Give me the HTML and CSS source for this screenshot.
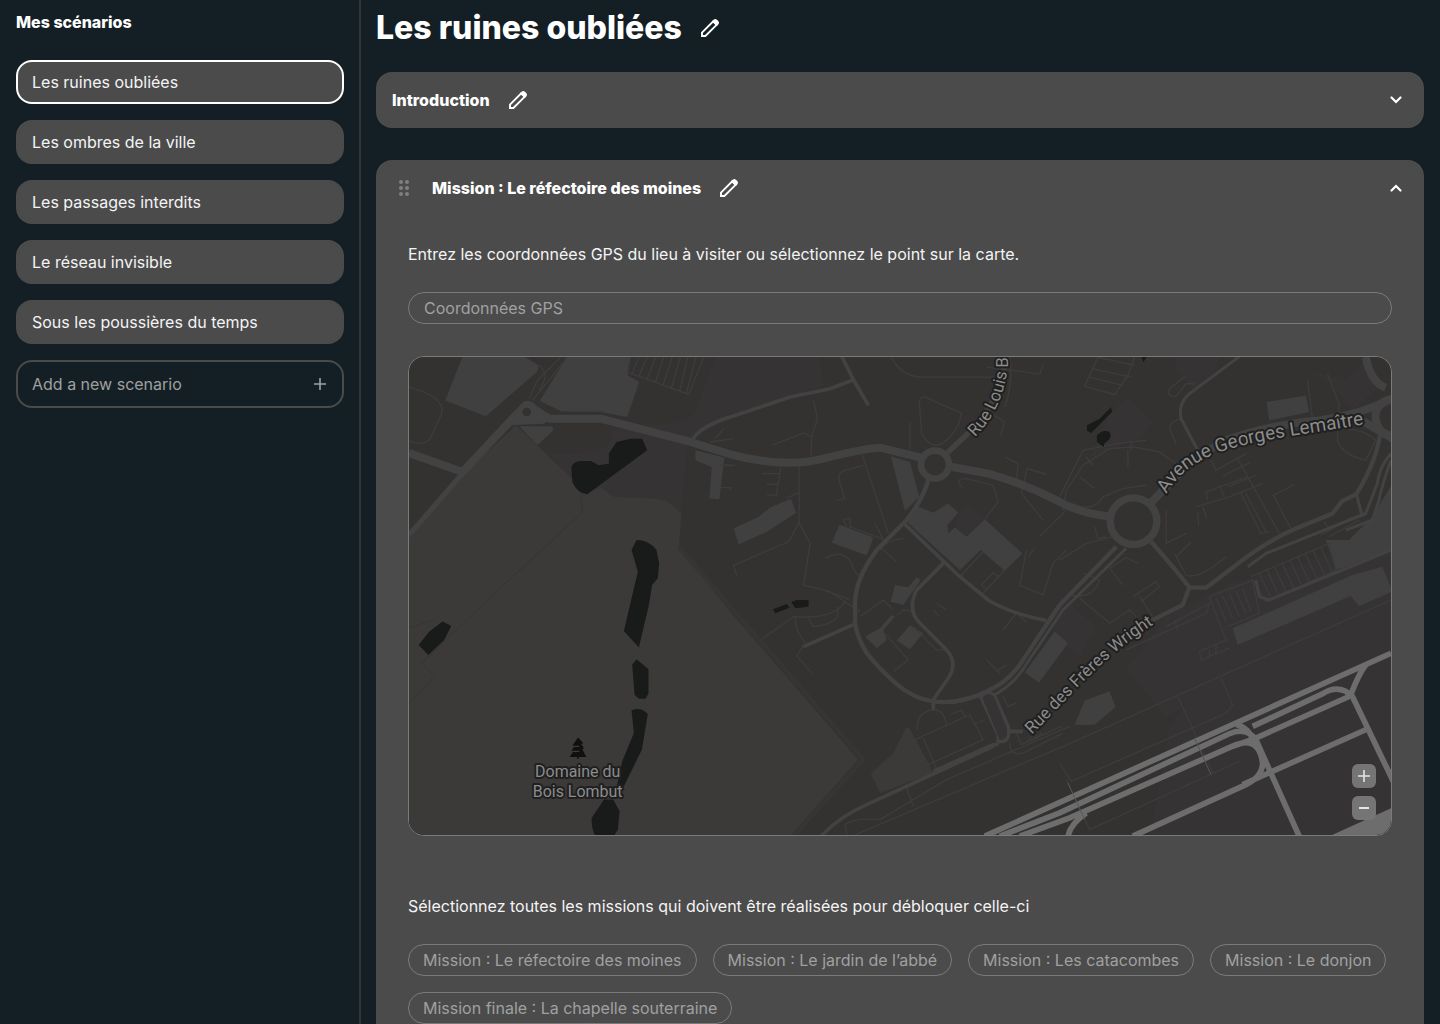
FILE: index.html
```html
<!DOCTYPE html>
<html lang="fr">
<head>
<meta charset="utf-8">
<meta name="viewport" content="width=device-width, initial-scale=1">
<title>Les ruines oubliées</title>
<link rel="stylesheet" href="styles.css">
</head>
<body>
<svg class="sprite" aria-hidden="true">
  <symbol id="pencil" viewBox="0 0 24 24">
    <path d="M4 20v-3.400L15.200 5.400l3.400 3.400L7.400 20z" fill="none" stroke="currentColor" stroke-width="1.900"/>
    <path d="M14 5.200l1.600-1.500a2.400 2.400 0 0 1 3.300 0l1.400 1.400a2.400 2.400 0 0 1 0 3.300L18.800 10z" fill="currentColor"/>
  </symbol>
  <symbol id="chevron" viewBox="0 0 24 24">
    <path d="M7.500 9.500l4.500 4.500L16.500 9.500" fill="none" stroke="currentColor" stroke-width="2.200" stroke-linecap="round"/>
  </symbol>
  <symbol id="plus" viewBox="0 0 24 24">
    <path d="M12 6v12M6 12h12" fill="none" stroke="currentColor" stroke-width="1.600"/>
  </symbol>
  <symbol id="minus" viewBox="0 0 24 24">
    <path d="M7 12h10" fill="none" stroke="currentColor" stroke-width="1.800"/>
  </symbol>
  <symbol id="grip" viewBox="0 0 24 24">
    <g fill="currentColor"><circle cx="9" cy="6" r="2"/><circle cx="15" cy="6" r="2"/><circle cx="9" cy="12" r="2"/><circle cx="15" cy="12" r="2"/><circle cx="9" cy="18" r="2"/><circle cx="15" cy="18" r="2"/></g>
  </symbol>
</svg>

<div class="app">
  <aside class="sidebar">
    <h2 class="sidebar-title">Mes scénarios</h2>
    <nav class="scenarios" aria-label="Mes scénarios">
      <a class="scenario scenario-active" href="#" aria-current="page">Les ruines oubliées</a>
      <a class="scenario" href="#">Les ombres de la ville</a>
      <a class="scenario" href="#">Les passages interdits</a>
      <a class="scenario" href="#">Le réseau invisible</a>
      <a class="scenario" href="#">Sous les poussières du temps</a>
      <button class="add" type="button"><span>Add a new scenario</span><svg class="icon"><use href="#plus"/></svg></button>
    </nav>
  </aside>

  <main class="content">
    <header class="page-head">
      <h1 class="page-title">Les ruines oubliées</h1>
      <button class="icon-button" type="button" aria-label="Renommer le scénario"><svg class="icon"><use href="#pencil"/></svg></button>
    </header>

    <section class="card">
      <div class="card-head">
        <h2 class="card-title">Introduction</h2>
        <button class="icon-button" type="button" aria-label="Renommer"><svg class="icon"><use href="#pencil"/></svg></button>
        <button class="icon-button toggle" type="button" aria-label="Déplier" aria-expanded="false"><svg class="icon"><use href="#chevron"/></svg></button>
      </div>
    </section>

    <section class="card">
      <div class="card-head">
        <button class="icon-button grip" type="button" aria-label="Déplacer"><svg class="icon"><use href="#grip"/></svg></button>
        <h2 class="card-title">Mission : Le réfectoire des moines</h2>
        <button class="icon-button" type="button" aria-label="Renommer"><svg class="icon"><use href="#pencil"/></svg></button>
        <button class="icon-button toggle open" type="button" aria-label="Replier" aria-expanded="true"><svg class="icon"><use href="#chevron"/></svg></button>
      </div>
      <div class="card-body">
        <label class="hint" for="gps">Entrez les coordonnées GPS du lieu à visiter ou sélectionnez le point sur la carte.</label>
        <input class="field" id="gps" type="text" placeholder="Coordonnées GPS">

        <div class="map">
          <svg class="map-canvas" viewBox="8 6 984 480" preserveAspectRatio="xMidYMid slice" role="img" aria-label="Carte">
            <defs>
              <path id="way-louis" d="M575 87Q604 58 608 14V-30"/>
              <path id="way-avenue" d="M767 144C788 108 822 97 890 86L990 70"/>
              <path id="way-wright" d="M632 385C671 347 700 307 764 268"/>
            </defs>
            <g transform="scale(.333333)">
              <path class="ground" d="M0 0h3000v1480H0z"/>
              <!-- districts -->
              <g class="district">
                <path d="M945 18H1255L1272 105 1000 200 870 268 858 300 843 490 800 450 640 440 500 370 440 310 560 310 620 290 640 235 850 215 882 190z"/>
                <path d="M2980 690L2470 920 2310 1130 2250 1470H2980z"/>
                <path d="M2980 560L2500 700 2300 800 2180 960 2300 1100 2980 800z"/>
                <path d="M2130 190L2185 138 2260 215 2230 260 2070 320z"/>
                <path d="M1980 735L2090 830 2040 920 1960 860z"/>
                <path d="M2330 18L2460 18 2440 80 2380 115 2330 60zM2720 60l120 30 60-60 40 80-80 70-70-90z"/>
              </g>
              <path class="forest" d="M345 225L520 390 545 430 600 412 640 440 760 445 800 452 843 490 835 590 990 785 1375 1230 1160 1470H0V570L185 375z"/>
              <path class="verge" d="M835 590L990 770 1390 1230 1170 1470"/>
              <path class="forest" d="M1520 1130L1480 1210 1412 1272 1440 1330 1600 1270z"/>
              <path class="boundary" d="M541 430L545 487 265 745 62 940 102 980 24 1062M24 835l80-28"/>
              <!-- buildings -->
              <g class="building">
                <path d="M185 18H370L415 45 408 65 255 198 133 150z"/>
                <path d="M500 18H690L682 75 716 95 680 200 600 185 480 182 417 152z"/>
                <path d="M355 228H455L458 240 410 285z"/>
                <path d="M885 300L972 322 957 447 927 445 934 350 885 330z"/>
                <path d="M1000 535L1075 500 1110 472 1172 446 1188 488 1100 545 1015 583z"/>
                <path d="M1318 524L1420 562 1400 616 1295 578z"/>
                <path d="M1472 318L1530 335 1558 440 1515 482z"/>
                <path d="M1552 468L1600 488 1645 460 1675 488 1642 525 1645 550 1665 532 1700 560 1755 507 1868 610 1815 662 1742 600 1680 660 1522 516z"/>
                <path d="M1485 705L1525 712 1550 682 1562 690 1510 765 1472 755z"/>
                <path d="M1395 860L1440 835 1475 795 1485 800 1450 840 1460 870 1430 895z"/>
                <path d="M1530 827L1570 850 1530 898 1490 872z"/>
                <path d="M1965 845L2005 880 1918 998 1875 968z"/>
                <path d="M2055 1052L2130 1024 2148 1072 2085 1125 2025 1126z"/>
                <path d="M2602 155L2720 135 2730 185 2610 210z"/>
                <path d="M2980 400L2920 500 2850 570 2780 570 2812 660 2980 600z"/>
                <path d="M2500 835L2580 800 2860 675 2950 650 2980 725 2880 768 2855 738 2515 885z"/>
              </g>
              <path class="district" d="M1675 490L1700 460 1755 505 1700 558 1665 530z"/>
              <!-- lanes and paths -->
              <g class="lane">
                <path d="M24 110Q140 140 120 195L90 260Q75 290 24 272M385 145L410 90 480 20M395 150L440 95 500 20M415 45Q450 70 415 120M480 182H610"/>
                <path d="M690 20L680 65 865 132 910 20M715 20L695 70M740 20L715 78M765 20L740 86M790 20L765 94M815 20L788 103M840 20L813 112M862 20L838 121M886 20L858 129"/>
                <path d="M930 275L1000 265M945 265L970 235M960 412H990V420M960 345H1005M1085 370H1140M1100 402H1135M1100 435H1128L1142 350M1155 445L1195 428M1197 345V515L1165 575 1000 645 1010 680M1195 515L1230 580 1210 705 1290 725 1380 785"/>
                <path d="M1240 150L1252 205 1235 255 1232 315M1115 285L1210 248 1235 260M1385 310L1465 550M1390 345L1330 362Q1310 370 1320 400L1333 445 1310 452M1340 530L1330 508 1350 505 1350 530 1450 568 1425 520M1275 625Q1330 595 1355 640 1360 670 1378 675"/>
                <path d="M1475 20Q1500 75 1560 80H1800M1558 150Q1570 130 1585 145L1685 188 1675 225Q1610 330 1565 250ZM1530 215V300M1815 170Q1840 100 1830 18M1760 50L1920 70 1930 45M1785 195L1813 215 1803 255"/>
                <path d="M1690 415Q1660 385 1700 385L1780 405 1795 455 1755 507M1815 320L1855 340 1850 390M1940 372L1882 355 1865 430 1930 510M1920 560L2000 480M1880 600L1860 705 1930 735 1960 640 2000 600M1905 595L1885 620M1445 595L1490 635M1440 600Q1460 570 1510 565M1680 680L1750 605M1745 735L1815 660M1745 705L1780 668 1795 680 1760 720z"/>
                <path d="M1270 720Q1330 740 1350 750M1088 865L1180 800Q1300 810 1335 755M1225 805L1240 830Q1330 820 1310 770M1185 800L1190 840 1215 880M1210 885L1190 918 1235 970M1380 800L1450 750 1480 780M1490 795L1510 780 1545 785M1450 845L1525 930 1480 965M1600 780L1620 800M1610 760L1640 780M1540 830L1610 900 1645 900M1760 930L1800 970M1790 965L1820 945M1810 840L1850 790 1880 815"/>
                <path d="M1552 1140Q1550 1085 1600 1080 1635 1080 1640 1130M1525 1135L1585 1245M1545 1170L1710 1095 1750 1170 1585 1245M1570 1165L1610 1258M1650 1095L1685 1080 1695 1100M1720 1125L1755 1110M1810 1040L1825 1070 1850 1060M1520 1315L1540 1370M1340 1458L1335 1425Q1360 1405 1440 1410L1640 1290 2010 1130M1360 1458L1990 1190M1830 1180Q1830 1220 1870 1210L1990 1150M1850 1150L1865 1185 1985 1130M1895 1160l-15 20M1910 1155l-15 20M1925 1148l-15 20"/>
                <path d="M2095 20L2055 108 2145 132 2185 75 2205 20M2095 20L2205 45M2080 55L2195 80M2070 80L2170 105M2360 75L2310 115Q2300 140 2330 138L2360 100 2385 100M2330 280L2310 235Q2310 215 2345 205M1990 480L2000 420 2050 345 2130 295 2200 290 2280 305 2330 340M1980 440L2050 300 2150 280 2240 270M2195 270V300M2060 320L2080 345M2185 300V350M2040 380L2085 415M2020 460Q2080 490 2110 440L2170 415 2240 405"/>
                <path d="M2435 330L2450 360 2540 310M2470 378L2555 335M2485 410L2570 375M2515 325L2640 550M2390 470L2490 440 2590 400M2425 450L2420 425 2545 380M2460 405L2475 440M2395 485L2398 525M2410 470L2422 505M2525 430L2585 550 2610 545M2540 430L2600 545M2675 535L2622 435 2685 403M2725 90L2740 205M2785 70L2820 160 2815 270Q2830 315 2900 330L2930 270Q2900 240 2840 235"/>
                <path d="M2300 480V580L2360 550M2330 620L2375 575M2325 610L2360 675Q2400 690 2480 620M2085 530L2095 565 2120 560M1980 630L2060 580 2140 560M2130 655L2170 705M2130 655L2180 622 2215 640M2050 670L2100 690Q2080 750 2010 735M2200 740L2270 695 2280 710 2225 755M2220 740L2260 800M2040 745L2130 820 2190 780 2210 800M2180 900L2420 790 2430 760 2300 830M2325 810L2335 840M2765 555L2860 500M2790 560L2880 510M2775 515L2785 530"/>
                <path d="M2430 740L2480 870 2400 905 2405 930 2490 895M2430 740L2560 690 2580 790 2485 830M2450 745L2480 815M2470 738L2500 805M2490 730L2520 800M2510 722L2540 790M2530 714L2555 785M2430 900V925M2450 885V910M1980 1195L2976 750M1980 1240L2015 1295 2480 1090 2500 1065 2465 985M2335 1040L2400 1180 2440 1270M2000 1290L2070 1440 2520 1235"/>
                <path d="M2555 680L2790 580 2810 660 2600 755 2560 690M2580 670l35 75M2603 660l35 75M2626 650l35 75M2649 640l35 75M2672 630l35 75M2695 620l35 75M2718 610l35 75M2741 600l35 75M2764 590l35 75"/>
              </g>
              <!-- streets -->
              <g class="street">
                <path class="w16" d="M185 370L24 555"/>
                <path class="w12" d="M878 265Q905 225 990 200L1170 140 1290 115 1360 88M1325 18L1360 88 1405 165"/>
                <path class="w16" d="M1638 312L1730 225Q1810 130 1820 0"/>
                <path class="w14" d="M1588 380Q1570 450 1515 515L1430 600Q1370 680 1365 750V820Q1370 860 1400 910 1440 960 1490 1003T1600 1055Q1680 1065 1760 1025 1830 995 1870 930L1980 765 2150 590"/>
                <path class="w10" d="M1775 1040Q1845 1005 1885 935L1990 780 2180 595M1740 1040Q1700 1038 1660 1060"/>
                <path class="w12" d="M1510 518L1680 680 1765 750Q1830 790 1940 812M1630 640L1550 720Q1520 780 1560 820L1640 900Q1675 940 1645 985L1600 1050V1080M1365 822L1210 890"/>
                <path class="w12" d="M1262 1460Q1320 1400 1400 1365L1780 1190M1743 1040L1795 1155Q1800 1190 1780 1185L1600 1265M1745 1045Q1760 1015 1785 1040L1825 1130Q1835 1180 1795 1175M1825 1145H1870"/>
                <path class="w14" d="M2255 575L2320 650 2370 712 2350 765 2230 825M2370 713H2420L2540 622Q2620 565 2690 535L2800 490 2830 452 2872 432Q2935 330 2945 240"/>
                <path class="w10" d="M2395 300L2345 205Q2335 160 2370 130L2520 18M2976 310Q2940 350 2935 400L2900 490 2600 610 2545 650M2976 330Q2950 400 2940 450L2920 510 2840 540M2872 432L2890 500M2570 690L2580 740 2610 750 2976 600"/>
                <path class="w24" d="M24 308L185 365 340 200Q378 150 420 190L445 205H600L870 275 990 312Q1150 355 1270 325T1440 292L1575 325M1645 348L1765 370Q1860 395 1980 455 2040 490 2140 500"/>
                <path class="w24" d="M2250 462L2310 400Q2380 320 2480 270 2600 225 2760 210 2880 195 2990 140M2870 200L2990 270"/>
                <path class="w24" d="M2976 145Q2925 160 2930 205T2976 255M2900 20Q2915 95 2960 112"/>
              </g>
              <path class="island" d="M1748 1045Q1765 1020 1785 1045L1822 1140Q1822 1170 1800 1172z"/>
              <path class="junction" d="M325 225L350 175Q378 130 410 170L445 205 430 220z"/>
              <circle class="hole" cx="378" cy="185" r="13"/>
              <circle class="ring" cx="1605" cy="343" r="42"/>
              <circle class="ring big" cx="2202" cy="513" r="70"/>
              <!-- taxiways -->
              <g class="taxiway">
                <path d="M1755 1460L2976 910M1800 1460L1980 1390 2490 1152Q2540 1130 2570 1170L2700 1460M2560 1130L2770 1032Q2820 1000 2860 1040L2990 1310M1860 1460L2010 1405 2510 1185Q2580 1160 2590 1240 2590 1280 2540 1305L2200 1460M2500 1190L2570 1165 2850 1040M2855 1035Q2880 970 2900 945M2530 1305L2900 1140M2005 1462Q2010 1425 2060 1390M2510 1125Q2550 1130 2570 1190"/>
                <path class="apron" d="M2780 1465L2990 1370V1470z"/>
              </g>
              <path class="seam" d="M2385 1165L2435 1275M2005 1300L2055 1410"/>
              <!-- ponds -->
              <g class="water">
                <path d="M512 350Q518 332 545 332H570L595 345 625 340V310L648 275 690 265H725L740 300 560 432Q530 430 515 395z"/>
                <path d="M708 570Q745 570 768 600L776 640 772 685 755 705 744 770 715 893 670 843 700 715 712 665 693 600z"/>
                <path d="M708 928L744 958V1030L735 1047H715L702 1035 695 945z"/>
                <path d="M693 1082Q720 1070 742 1093L724 1200 670 1310 645 1330 665 1235 700 1150z"/>
                <path d="M610 1350H638L657 1385 652 1440 640 1460H585Q572 1440 573 1405z"/>
                <path d="M125 815L151 828 130 870 82 915 53 885 85 845z"/>
                <path d="M1118 778L1160 762 1168 773 1125 790zM1173 755L1190 750H1225V770L1185 775z"/>
                <path d="M2062 225L2100 205 2135 170 2137 185 2075 248 2062 242zM2092 255Q2110 235 2130 245 2140 265 2115 278L2112 290 2092 275zM2225 18H2242L2232 35z"/>
              </g>
              <path class="tree" d="M532 1163L548 1180 542 1183 550 1196 545 1199 557 1222H534V1228H530V1222H507L517 1207H536V1203H512L520 1192H536V1188H515z"/>
            </g>
            <g class="label">
              <text class="label-small" x="177" y="427" text-anchor="middle">Domaine du</text>
              <text class="label-small" x="177" y="447" text-anchor="middle">Bois Lombut</text>
              <text><textPath href="#way-louis">Rue Louis B</textPath></text>
              <text class="label-large"><textPath href="#way-avenue">Avenue Georges Lemaître</textPath></text>
              <text><textPath href="#way-wright">Rue des Frères Wright</textPath></text>
            </g>
          </svg>
          <div class="zoom">
            <button class="zoom-button" type="button" aria-label="Zoomer"><svg class="icon"><use href="#plus"/></svg></button>
            <button class="zoom-button" type="button" aria-label="Dézoomer"><svg class="icon"><use href="#minus"/></svg></button>
          </div>
        </div>

        <p class="hint">Sélectionnez toutes les missions qui doivent être réalisées pour débloquer celle-ci</p>
        <div class="chips">
          <button class="chip" type="button">Mission : Le réfectoire des moines</button>
          <button class="chip" type="button">Mission : Le jardin de l’abbé</button>
          <button class="chip" type="button">Mission : Les catacombes</button>
          <button class="chip" type="button">Mission : Le donjon</button>
          <button class="chip" type="button">Mission finale : La chapelle souterraine</button>
        </div>
      </div>
    </section>
  </main>
</div>
</body>
</html>
```
FILE: styles.css
```css
* { box-sizing: border-box; }
body {
  margin: 0;
  background: #141f25;
  color: #fff;
  font: 400 16px/20px Inter, "Liberation Sans", sans-serif;
}
button, input { font: inherit; color: inherit; }
button { padding: 0; border: 0; background: none; cursor: pointer; }
h1, h2, p { margin: 0; }
.sprite { position: absolute; width: 0; height: 0; }
.icon { display: block; width: 24px; height: 24px; }

.app { display: flex; height: 100vh; }
.sidebar {
  flex: 0 0 361px;
  padding: 12px 15px 16px 16px;
  border-right: 2px solid #303538;
}
.sidebar-title { font-size: 16px; font-weight: 800; }
.scenarios { display: flex; flex-direction: column; gap: 16px; margin-top: 28px; }
.scenario {
  padding: 10px 14px;
  border: 2px solid #4b4b4b;
  border-radius: 16px;
  background: #4b4b4b;
  color: #f4f4f4;
  text-decoration: none;
}
.scenario-active { border-color: #fff; }
.add {
  display: flex;
  align-items: center;
  justify-content: space-between;
  padding: 10px;
  padding-left: 14px;
  border: 2px solid #4b4b4b;
  border-radius: 16px;
  color: #a0a0a0;
  text-align: left;
}

.content {
  flex: 1;
  min-width: 0;
  padding: 8px 16px 32px 15px;
  overflow-y: auto;
  scrollbar-width: none;
}
.page-head { display: flex; align-items: center; gap: 16px; margin-bottom: 24px; }
.page-title { font-size: 32px; line-height: 40px; font-weight: 800; }
.card { margin-bottom: 32px; border-radius: 16px; background: #4b4b4b; }
.card-head { display: flex; align-items: center; gap: 16px; padding: 16px; }
.card-title { font-size: 16px; line-height: 24px; font-weight: 800; }
.toggle { margin-left: auto; }
.open .icon { transform: rotate(180deg); }
.grip { color: #808080; cursor: grab; }

.card-body { padding: 28px 32px 32px; }
.hint { display: block; margin-bottom: 28px; color: #f4f4f4; }
.field {
  display: block;
  width: 100%;
  height: 32px;
  padding: 0 15px;
  border: 1px solid #7b7b7b;
  border-radius: 16px;
  background: transparent;
}
.field::placeholder { color: #a0a0a0; opacity: 1; }

.map {
  position: relative;
  height: 480px;
  margin: 32px 0 60px;
  border: 1px solid #7b7b7b;
  border-radius: 16px;
  overflow: hidden;
}
.map-canvas { display: block; width: 100%; height: 100%; }
.zoom {
  position: absolute;
  right: 15px;
  bottom: 15px;
  display: grid;
  gap: 8px;
}
.zoom-button { border-radius: 6px; background: #757575; color: #e4e4e4; }

.ground { fill: #343231; }
.district { fill: #363334; }
.forest { fill: #3b3a38; }
.verge { fill: none; stroke: #373534; stroke-width: 14; }
.boundary { fill: none; stroke: #353433; stroke-width: 3; }
.building { fill: #404040; }
.lane { fill: none; stroke: #3d3c3c; stroke-width: 4; }
.street { fill: none; stroke: #424242; stroke-linejoin: round; }
.w10 { stroke-width: 9; }
.w12 { stroke-width: 11; }
.w14 { stroke-width: 13; }
.w16 { stroke-width: 16; }
.w24 { stroke-width: 24; }
.island { fill: #363334; }
.junction { fill: #424242; }
.hole { fill: #343231; }
.ring { fill: #343231; stroke: #424242; stroke-width: 20; }
.big { stroke-width: 22; }
.taxiway { fill: none; stroke: #6d6d6d; stroke-width: 17; }
.taxiway .apron { fill: #6d6d6d; stroke: none; }
.seam { fill: none; stroke: #555; stroke-width: 3; }
.water { fill: #191b1a; }
.tree { fill: #101010; }
.label {
  font-family: Roboto, "Liberation Sans", sans-serif;
  font-size: 17px;
  font-weight: 400;
  fill: #8c8c8c;
  stroke: #202020;
  stroke-width: 4px;
  stroke-linejoin: round;
  paint-order: stroke;
}
.label-small { font-size: 16px; }
.label-large { font-size: 19px; }

.chips { display: flex; flex-wrap: wrap; gap: 16px; }
.chip {
  height: 32px;
  padding: 0 14px;
  border: 1px solid #7b7b7b;
  border-radius: 16px;
  color: #a0a0a0;
}
```
